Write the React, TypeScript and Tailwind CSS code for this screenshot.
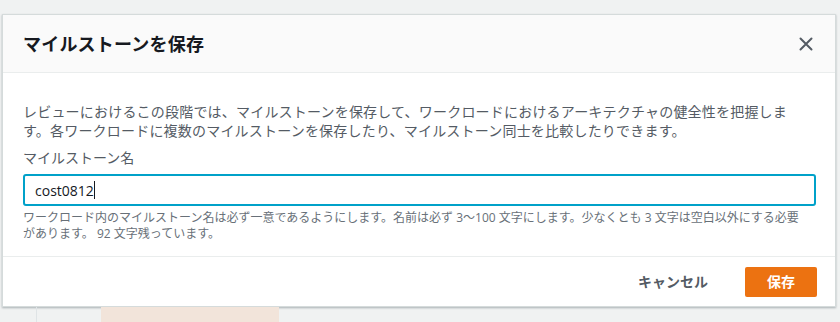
import React from 'react';

const font = { fontFamily: '"Open Sans", "Noto Sans CJK JP", sans-serif' };

const CloseIcon: React.FC = () => (
  <svg width="16" height="16" viewBox="0 0 16 16" fill="none" stroke="#545b64" strokeWidth="2" strokeLinecap="round">
    <path d="M2.5 2.5l11 11M13.5 2.5l-11 11" />
  </svg>
);

const SaveMilestoneModal: React.FC = () => {
  return (
    <div className="w-[834px] h-[293px] bg-white border border-[#d5dbdb] shadow-[0_1px_2px_rgba(0,28,36,0.3)] flex flex-col">
      <div className="h-[58px] shrink-0 bg-[#fafafa] border-b border-[#eaeded] pl-[20px] pr-[21px] flex items-center justify-between">
        <h2 className="text-[18px] font-bold text-[#16191f] leading-[22px] tracking-[0.2px]">マイルストーンを保存</h2>
        <button className="w-[16px] h-[16px] flex items-center justify-center">
          <CloseIcon />
        </button>
      </div>

      <div className="flex-1 pt-[29px] pl-[20px] pr-[19px]">
        <p className="text-[14px] leading-[19px] text-[#545b64] whitespace-nowrap tracking-[0.2px]">
          レビューにおけるこの段階では、マイルストーンを保存して、ワークロードにおけるアーキテクチャの健全性を把握しま
          <br />
          す。各ワークロードに複数のマイルストーンを保存したり、マイルストーン同士を比較したりできます。
        </p>
        <div className="mt-[8px] text-[14px] leading-[20px] text-[#545b64]">マイルストーン名</div>
        <div className="mt-[6px] h-[32px] border-2 border-[#00a1c9] rounded-[3px] flex items-center pl-[10px] text-[14px] text-[#16191f]">
          <span>cost0812</span>
          <span className="inline-block w-px h-[18px] bg-[#16191f]" />
        </div>
        <p className="mt-[4px] text-[12px] leading-[16px] text-[#687078] whitespace-nowrap">
          ワークロード内のマイルストーン名は必ず一意であるようにします。名前は必ず 3～100 文字にします。少なくとも 3 文字は空白以外にする必要
          <br />
          があります。 92 文字残っています。
        </p>
      </div>

      <div className="h-[50px] shrink-0 border-t border-[#eaeded] flex items-center justify-end pr-[18px] gap-[17px]">
        <button className="px-[20px] h-[30px] text-[14px] font-bold text-[#545b64]">キャンセル</button>
        <button className="w-[72px] h-[30px] bg-[#ec7211] rounded-[2px] text-[14px] font-bold text-white">保存</button>
      </div>
    </div>
  );
};

export default function App() {
  return (
    <div className="w-[840px] h-[322px] bg-[#f0f2f2] overflow-hidden flex flex-col" style={font}>
      <div className="pt-[14px] pl-[2px]">
        <SaveMilestoneModal />
      </div>
      <div className="flex-1 flex">
        <div className="w-[37px] border-r border-[#dfe4e6]" />
        <div className="ml-[64px] w-[178px] bg-[#f2e4da]" />
      </div>
    </div>
  );
}
